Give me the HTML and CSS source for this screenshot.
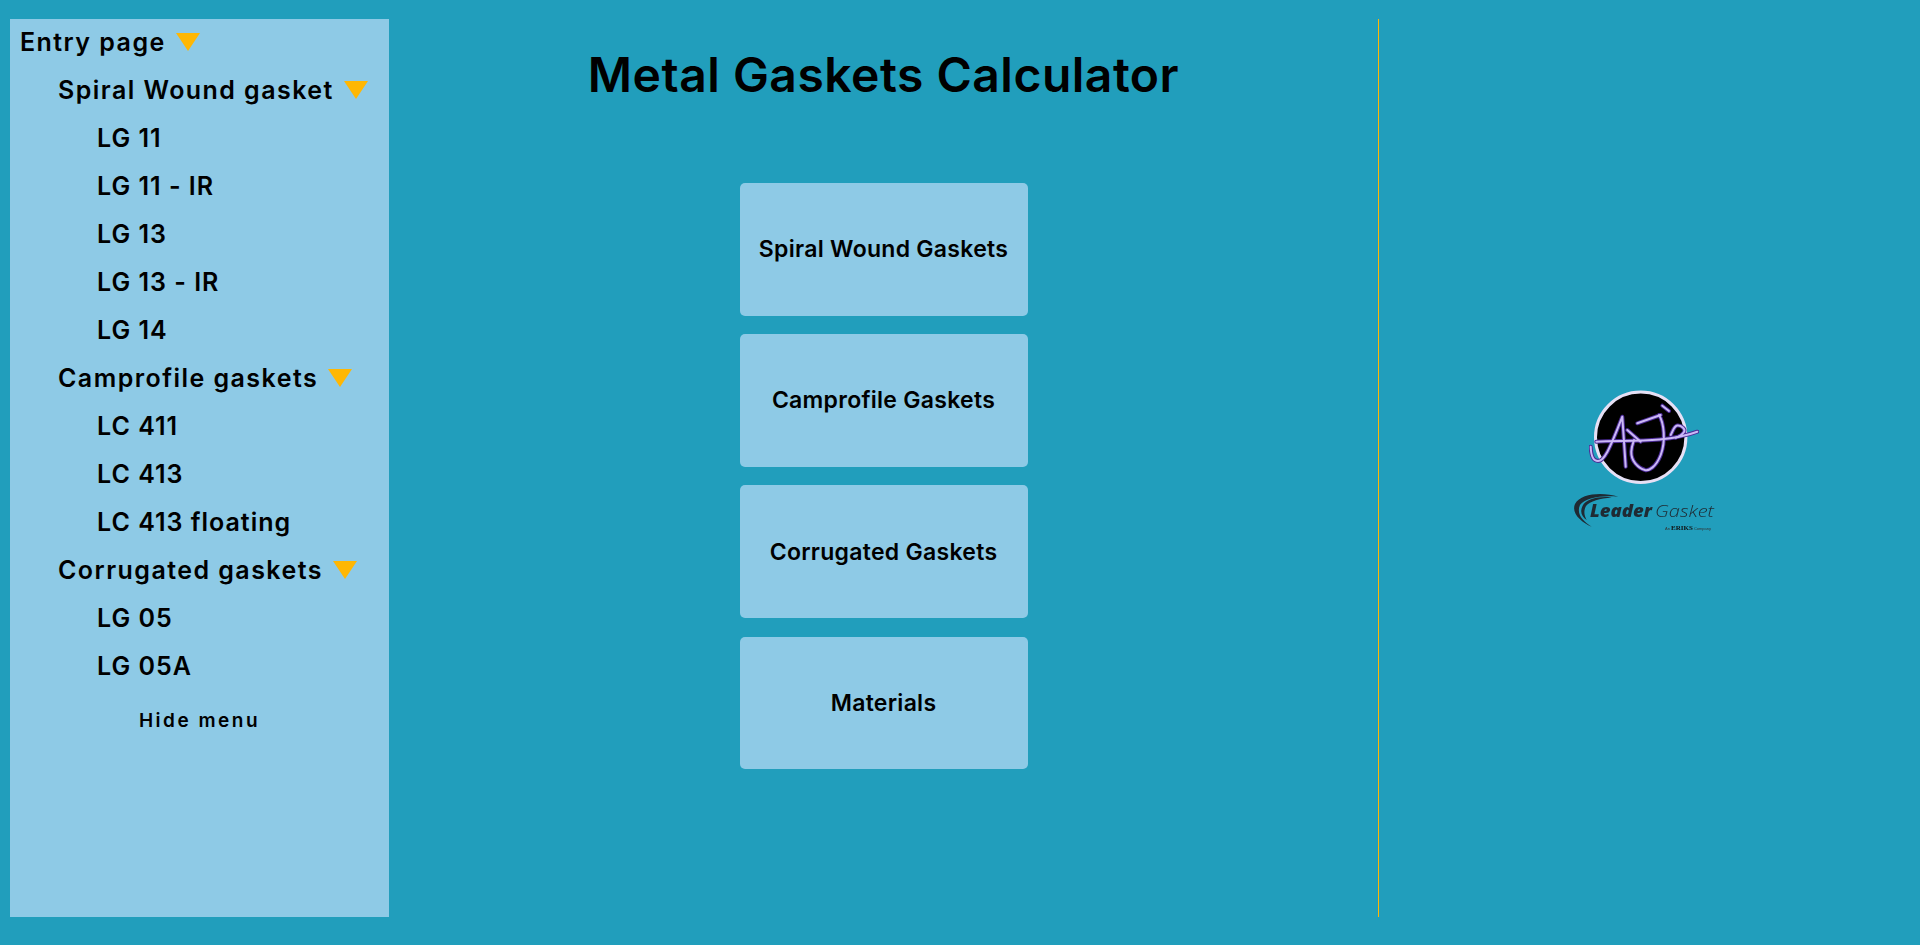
FILE: index.html
```html
<!DOCTYPE html>
<html>
<head>
    <title>Metal Gaskets Calculator</title>
    <link rel="stylesheet" href="styles.css">
</head>
<body>
    <nav class="sidebar">
        <div class="menu-row level-0">Entry page<span class="arrow"></span></div>
        <div class="menu-row level-1">Spiral Wound gasket<span class="arrow"></span></div>
        <div class="menu-row level-2">LG 11</div>
        <div class="menu-row level-2">LG 11 - IR</div>
        <div class="menu-row level-2">LG 13</div>
        <div class="menu-row level-2">LG 13 - IR</div>
        <div class="menu-row level-2">LG 14</div>
        <div class="menu-row level-1">Camprofile gaskets<span class="arrow"></span></div>
        <div class="menu-row level-2">LC 411</div>
        <div class="menu-row level-2">LC 413</div>
        <div class="menu-row level-2">LC 413 floating</div>
        <div class="menu-row level-1">Corrugated gaskets<span class="arrow"></span></div>
        <div class="menu-row level-2">LG 05</div>
        <div class="menu-row level-2">LG 05A</div>
        <div class="hide-menu">Hide menu</div>
    </nav>

    <main class="main">
        <h1>Metal Gaskets Calculator</h1>
        <div class="cards">
            <button class="card">Spiral Wound Gaskets</button>
            <button class="card">Camprofile Gaskets</button>
            <button class="card">Corrugated Gaskets</button>
            <button class="card">Materials</button>
        </div>
    </main>

    <aside class="side">
        <svg class="logo-aj" width="110" height="96" viewBox="0 0 110 96">
            <defs>
                <g id="signature" fill="none" stroke-linecap="round" stroke-linejoin="round">
                    <path d="M1.7 57.7C2 68 5 72 9 72c6 0 11-10 24.3-44.3L36.7 77.7"/>
                    <path d="M7.3 52.7C36.7 51 76.7 54.3 108.3 42.7"/>
                    <path d="M38.3 41L51.700 52.700"/>
                    <path d="M48.300 34.300L71.700 26"/>
                    <path d="M73.300 16.700L80 22"/>
                    <path d="M70 26C75 34 77 52 71.700 66 67 78 60 82 56 81 49 79 42 72 42.300 62.700 42.500 58 44 54 45 51"/>
                    <path d="M81.700 46C84 42 85 37 88.300 36.500 92 36 97 40 95 43 93 46 90 47.500 86.700 48.700"/>
                </g>
            </defs>
            <circle cx="51.700" cy="48.300" r="45.200" fill="#000" stroke="#e6e0f5" stroke-width="3"/>
            <use href="#signature" stroke="#4b2b96" stroke-width="4"/>
            <use href="#signature" stroke="#cbb8f5" stroke-width="2"/>
        </svg>
        <svg class="logo-leader" width="142" height="40" viewBox="0 0 142 40">
            <path d="M45.300 4.700C30 0 8 1 2 12-2 21 8 30 18.700 34.700 10 29 3 22 7 13 12 6 28 3 45.300 4.700z" fill="#1f2a33"/>
            <path d="M38.700 5.500C26 4 13 7 9.500 14 6.500 20 9 25 13.700 28 11 23 10.500 19 13 14 17 9 27 6.500 38.700 5.500z" fill="#1f2a33"/>
            <text class="leader-bold" x="17" y="24.700" textLength="62" lengthAdjust="spacingAndGlyphs">Leader</text>
            <text class="leader-thin" x="82" y="24.700" textLength="59" lengthAdjust="spacingAndGlyphs">Gasket</text>
            <text class="leader-small" x="92" y="38">An <tspan class="eriks">ERIKS</tspan> Company</text>
        </svg>
    </aside>
</body>
</html>
```

FILE: styles.css
```css
* {
    box-sizing: border-box;
}

html,
body {
    height: 100%;
}

body {
    margin: 0;
    padding: 19px 0 28px 10px;
    background: #219ebc;
    color: #000;
    font-family: Inter, "Open Sans", sans-serif;
    display: flex;
    overflow: hidden;
}

.sidebar {
    width: 379px;
    flex: none;
    background: #8ecae6;
}

.menu-row {
    height: 48px;
    padding-bottom: 2px;
    display: flex;
    align-items: center;
    font-size: 25px;
    font-weight: 600;
    letter-spacing: 1.45px;
}

.level-0 {
    padding-left: 10px;
}

.level-1 {
    padding-left: 48px;
}

.level-2 {
    padding-left: 87px;
    letter-spacing: 1px;
}

.arrow {
    width: 0;
    height: 0;
    margin-left: 10px;
    border-left: 12px solid transparent;
    border-right: 12px solid transparent;
    border-top: 18px solid #ffb703;
}

.hide-menu {
    margin-top: 18px;
    text-align: center;
    font-size: 19px;
    font-weight: 600;
    letter-spacing: 2.5px;
}

.main {
    width: 990px;
    flex: none;
    border-right: 1px solid #ffb703;
    text-align: center;
}

h1 {
    margin: 27px 0 0;
    font-size: 48px;
    line-height: 58px;
    font-weight: 600;
    letter-spacing: 0.5px;
}

.cards {
    width: 288px;
    margin: 79px auto 0;
    display: flex;
    flex-direction: column;
    gap: 18.7px;
}

.card {
    height: 132.5px;
    padding: 0;
    border: 0;
    border-radius: 5px;
    background: #8ecae6;
    color: #000;
    font-family: inherit;
    font-size: 23px;
    font-weight: 600;
    letter-spacing: 0.28px;
}

.side {
    flex: 1;
    display: flex;
    flex-direction: column;
    align-items: center;
    justify-content: center;
    padding: 0 12px 15px 0;
}

.logo-aj,
.logo-leader {
    filter: blur(0.4px);
}

.logo-leader {
    margin-top: 7px;
}

.leader-bold {
    font-family: "Open Sans", sans-serif;
    font-size: 17px;
    font-weight: 800;
    font-style: italic;
    fill: #1f2a33;
}

.leader-thin {
    font-family: "Open Sans", sans-serif;
    font-size: 17px;
    font-weight: 300;
    font-style: italic;
    fill: #1f2a33;
}

.leader-small {
    font-family: "Liberation Sans", sans-serif;
    font-size: 4px;
    fill: #333;
}

.eriks {
    font-family: "Liberation Serif", serif;
    font-weight: 700;
    font-size: 7px;
    fill: #111;
}
```
